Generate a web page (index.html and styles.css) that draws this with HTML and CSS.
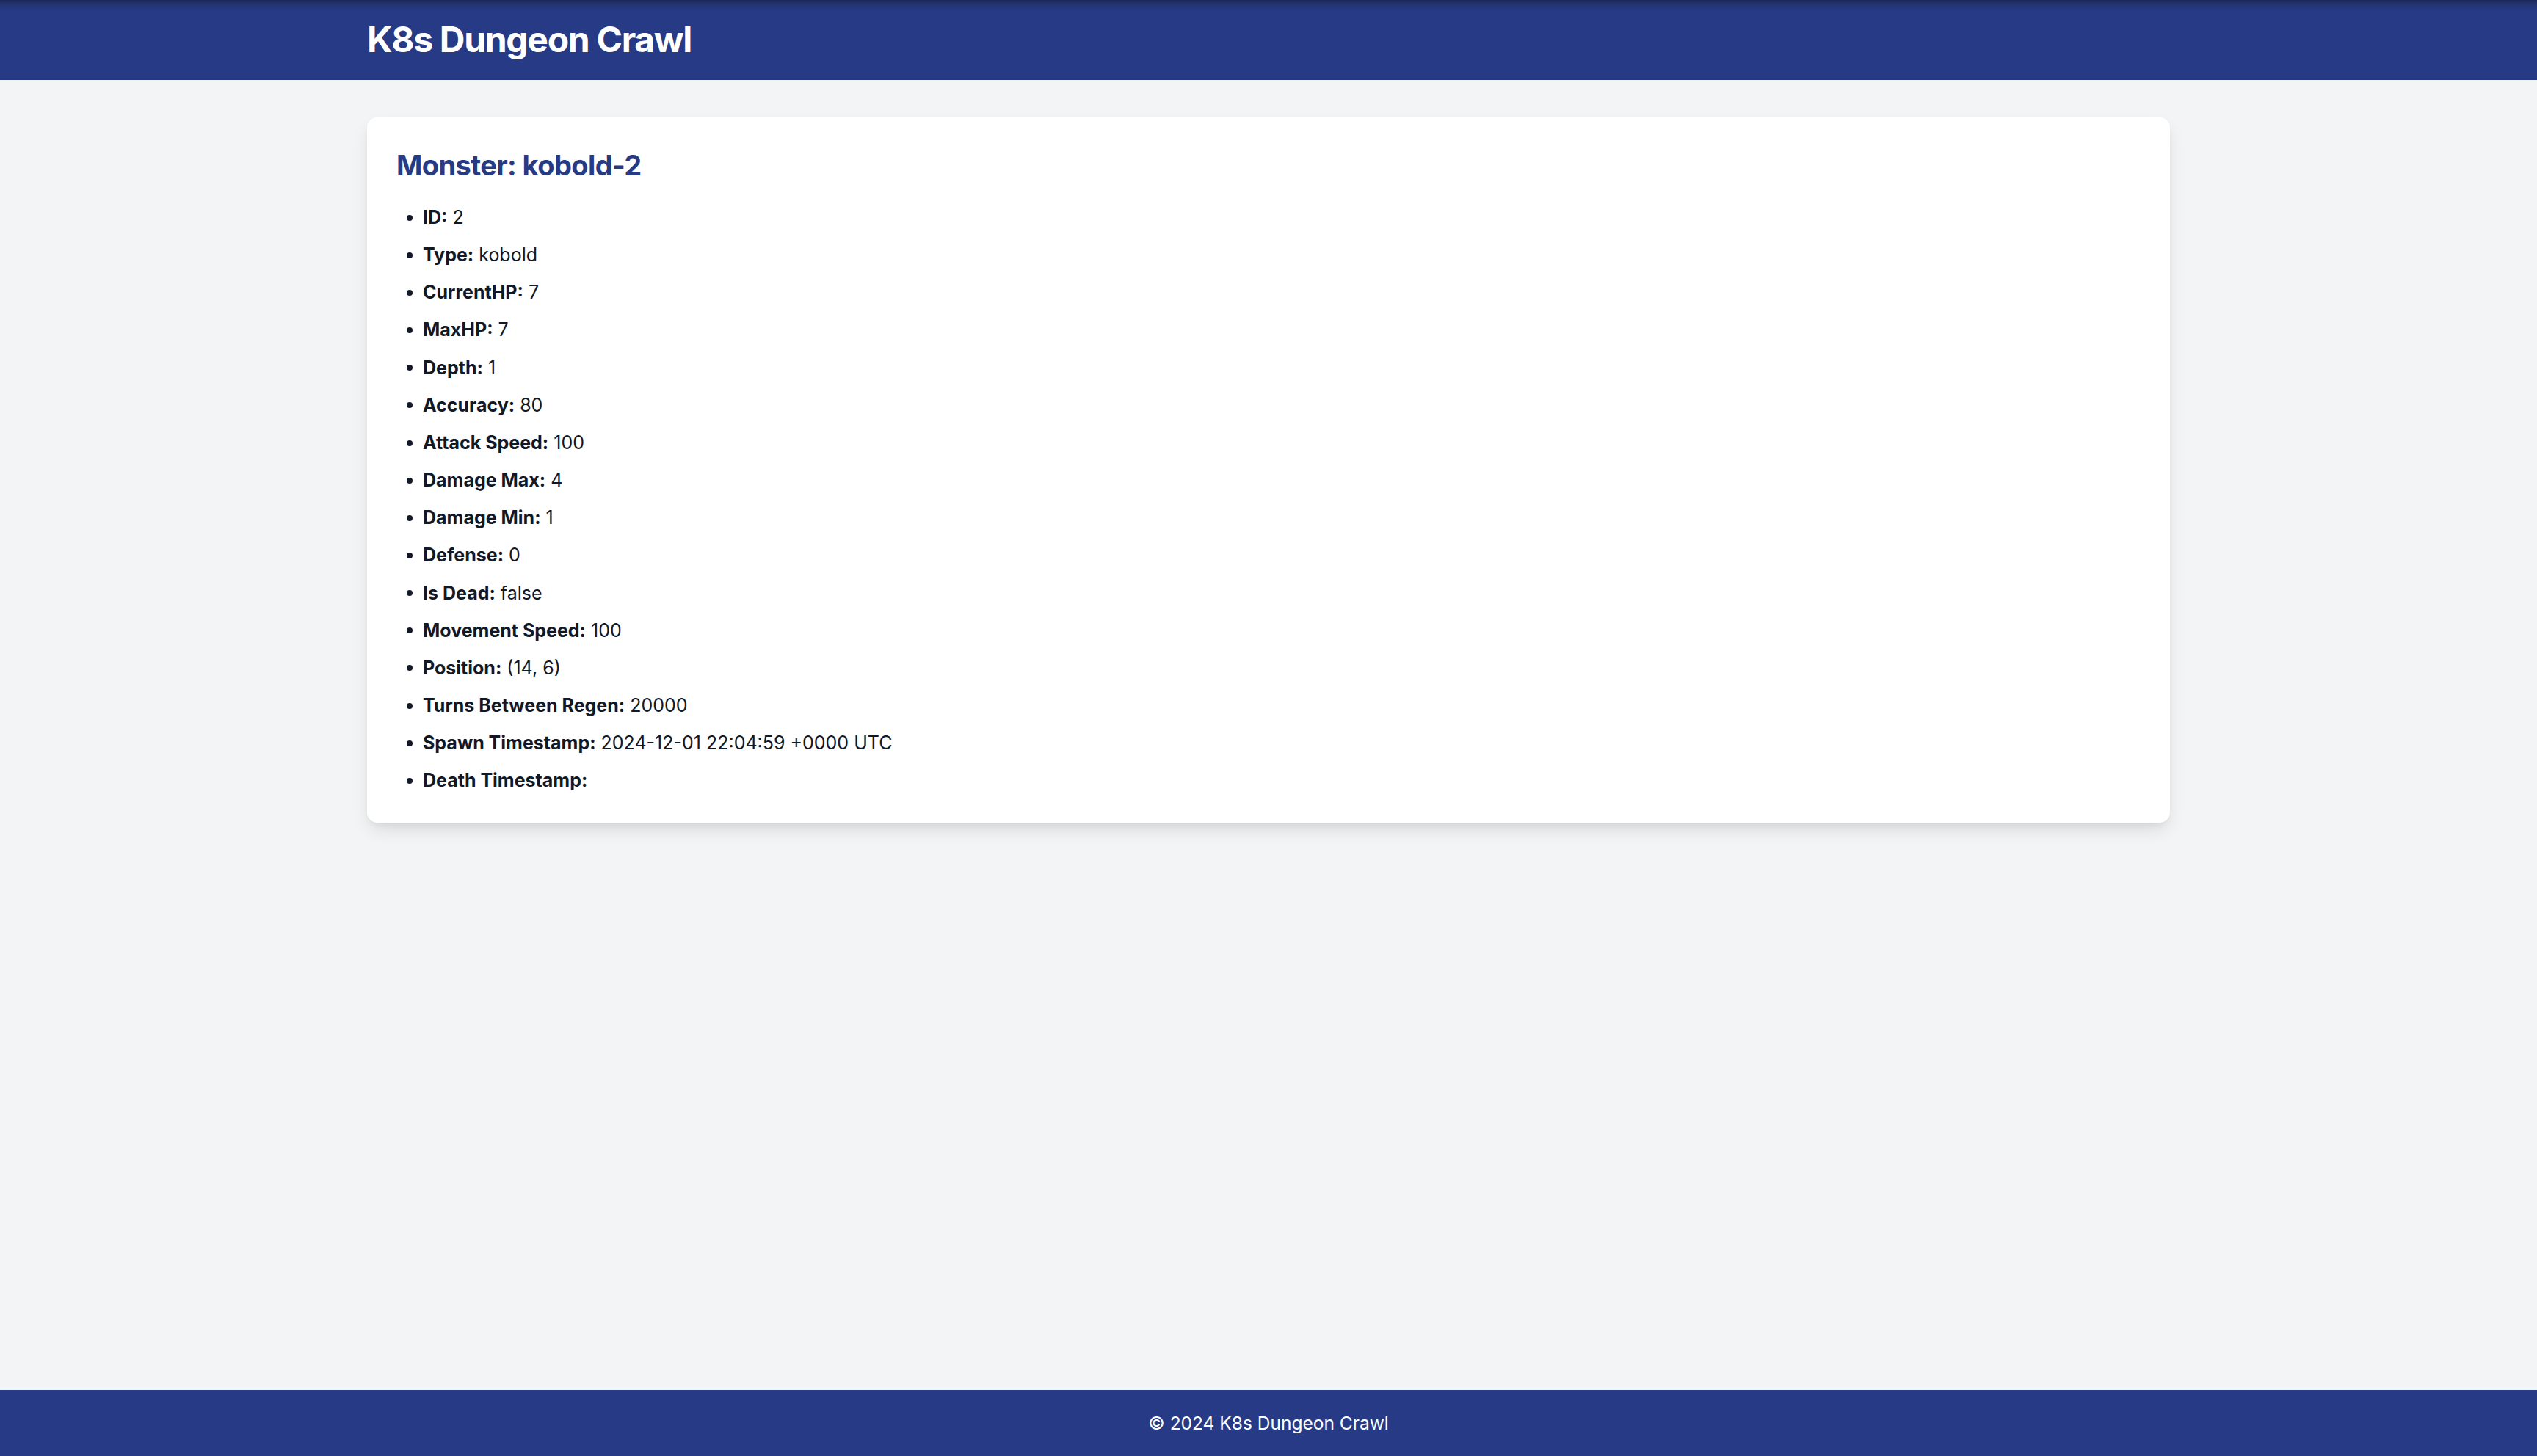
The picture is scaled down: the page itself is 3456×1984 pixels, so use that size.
FILE: index.html
```html
<!DOCTYPE html>
<html lang="en">
<head>
<meta charset="utf-8">
<title>K8s Dungeon Crawl</title>
<link rel="stylesheet" href="styles.css">
</head>
<body>
<header class="site-header">
  <div class="container">
    <h1 class="brand">K8s Dungeon Crawl</h1>
  </div>
</header>
<main class="main">
  <div class="container">
    <section class="card">
      <h2 class="card-title">Monster: kobold-2</h2>
      <ul class="stats">
        <li><strong>ID:</strong> 2</li>
        <li><strong>Type:</strong> kobold</li>
        <li><strong>CurrentHP:</strong> 7</li>
        <li><strong>MaxHP:</strong> 7</li>
        <li><strong>Depth:</strong> 1</li>
        <li><strong>Accuracy:</strong> 80</li>
        <li><strong>Attack Speed:</strong> 100</li>
        <li><strong>Damage Max:</strong> 4</li>
        <li><strong>Damage Min:</strong> 1</li>
        <li><strong>Defense:</strong> 0</li>
        <li><strong>Is Dead:</strong> false</li>
        <li><strong>Movement Speed:</strong> 100</li>
        <li><strong>Position:</strong> (14, 6)</li>
        <li><strong>Turns Between Regen:</strong> 20000</li>
        <li><strong>Spawn Timestamp:</strong> 2024-12-01 22:04:59 +0000 UTC</li>
        <li><strong>Death Timestamp:</strong> </li>
      </ul>
    </section>
  </div>
</main>
<footer class="site-footer">
  <p class="copy">© 2024 K8s Dungeon Crawl</p>
</footer>
</body>
</html>
```
FILE: styles.css
```css
* { box-sizing: border-box; }
html, body { margin: 0; padding: 0; }
body {
  font-family: Inter, "Noto Sans", "Liberation Sans", sans-serif;
  background: #f3f4f6;
  color: #111827;
  min-height: 100vh;
  display: flex;
  flex-direction: column;
}
.container {
  width: 2456px;
  margin: 0 auto;
}
.site-header {
  background: linear-gradient(to bottom, #1c2658 0px, #22336f 5px, #263a85 14px, #263a85 100%);
  color: #fff;
}
.brand {
  margin: 0;
  padding: 22px 0 23px;
  font-size: 48px;
  line-height: 64px;
  font-weight: 700;
  letter-spacing: -1.3px;
}
.main {
  flex: 1;
  padding-top: 51px;
}
.card {
  background: #fff;
  border-radius: 14px;
  padding: 37px 40px 31px;
  box-shadow: 0 12px 24px -4px rgba(0,0,0,0.12), 0 4px 10px -4px rgba(0,0,0,0.08);
}
.card-title {
  margin: 0 0 18px;
  font-size: 38px;
  line-height: 56px;
  font-weight: 700;
  color: #263a85;
  letter-spacing: -0.6px;
}
.stats {
  list-style: none;
  margin: 0;
  padding: 0;
  font-size: 25px;
}
.stats li {
  display: flex;
  align-items: center;
  height: 51.16px;
  line-height: 51.16px;
  white-space: pre;
}
.stats li::before {
  content: "";
  width: 8px;
  height: 8px;
  border-radius: 50%;
  background: #111827;
  margin-left: 14px;
  margin-right: 14px;
  flex: none;
}
.stats strong { font-weight: 700; }
.site-footer {
  background: #263a85;
  color: #fff;
  text-align: center;
}
.copy {
  margin: 0;
  padding: 29px 0;
  font-size: 24.5px;
  line-height: 32px;
}
```
